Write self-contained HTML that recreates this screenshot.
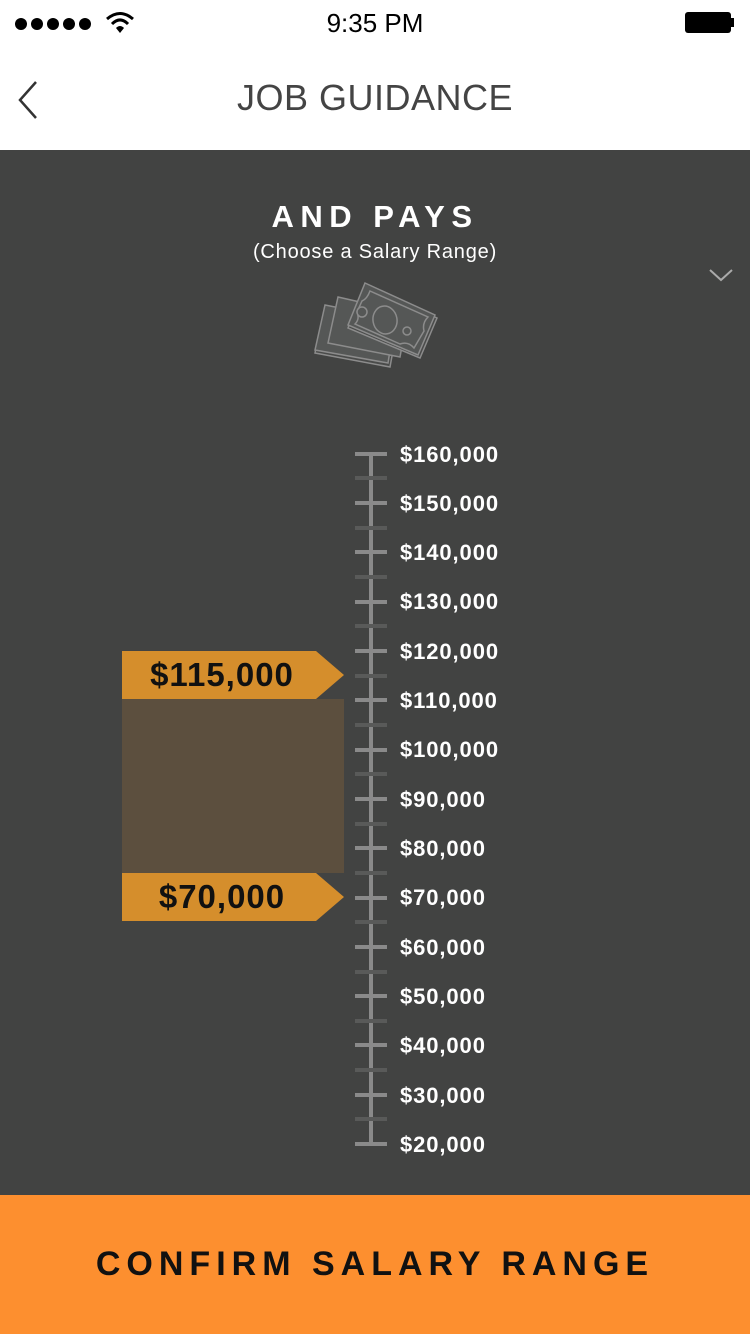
<!DOCTYPE html>
<html><head><meta charset="utf-8"><style>
*{margin:0;padding:0;box-sizing:border-box}
body{width:750px;height:1334px;overflow:hidden;background:#424342;font-family:"Liberation Sans",sans-serif;position:relative}
.abs{position:absolute}
.hdr{left:0;top:0;width:750px;height:150px;background:#fff}
.mj{position:absolute;left:355px;width:32px;height:4px;background:#8a8a8a}
.mn{position:absolute;left:355px;width:32px;height:4px;background:#595a59}
.lb{position:absolute;left:400px;color:#fff;font-size:22px;font-weight:bold;line-height:24px;letter-spacing:0.9px}
.mk{position:absolute;left:122px;width:200px;text-align:center;font-size:33px;font-weight:bold;color:#111;letter-spacing:1px}
</style></head><body>
<div class="abs hdr">
  <div class="abs" style="left:14px;top:16px">
    <svg width="96" height="16"><g fill="#000"><circle cx="7" cy="8" r="6"/><circle cx="23" cy="8" r="6"/><circle cx="39" cy="8" r="6"/><circle cx="55" cy="8" r="6"/><circle cx="71" cy="8" r="6"/></g></svg>
  </div>
  <svg class="abs" style="left:105px;top:11px" width="30" height="24" viewBox="0 0 30 24"><path d="M2 8 Q15 -3 28 8" stroke="#000" stroke-width="3" fill="none"/><path d="M7 13 Q15 5 23 13" stroke="#000" stroke-width="3" fill="none"/><path d="M11 17 L15 22 L19 17 Q15 13 11 17Z" fill="#000"/></svg>
  <div class="abs" style="left:0;width:750px;top:8px;text-align:center;font-size:26px;color:#000">9:35 PM</div>
  <div class="abs" style="left:685px;top:12px;width:46px;height:21px;background:#000;border-radius:3px"></div>
  <div class="abs" style="left:731px;top:18px;width:3px;height:9px;background:#000"></div>
  <svg class="abs" style="left:16px;top:80px" width="24" height="40"><path d="M20 2 L4 20 L20 38" stroke="#333" stroke-width="2.5" fill="none"/></svg>
  <div class="abs" style="left:0;width:750px;top:77px;text-align:center;font-size:36px;color:#444;letter-spacing:0.5px">JOB GUIDANCE</div>
</div>
<div class="abs" style="left:0;width:750px;top:199px;text-align:center;color:#fff;font-size:31px;font-weight:bold;letter-spacing:6.5px">AND PAYS</div>
<div class="abs" style="left:0;width:750px;top:241px;text-align:center;color:#fff;font-size:20px;letter-spacing:0.8px">(Choose a Salary Range)</div>
<svg class="abs" style="left:708px;top:268px" width="28" height="16"><path d="M2 2 L13 12 L24 2" stroke="#aaa" stroke-width="2" fill="none"/></svg>
<svg class="abs" style="left:310px;top:275px" width="130" height="95" viewBox="0 0 130 95">
 <g stroke="#8c8c8c" stroke-width="1.5" fill="#555756">
  <polygon points="15,32 88,48 80,92 5,78" fill="#4a4b4a"/>
  <polygon points="15,30 85,44 78,88 5,75"/>
  <polygon points="28,22 98,38 90,82 18,68"/>
  <polygon points="55,11 127,43 110,83 38,53" fill="#4a4b4a"/>
  <polygon points="55,8 125,40 108,80 38,50"/>
  <path d="M60,16 L118,42 Q112,48 114,56 L104,73 Q98,66 90,69 L45,49 Q50,44 47,37 L52,26 Q57,24 60,16Z" fill="none"/>
  <ellipse cx="75" cy="45" rx="12" ry="14" transform="rotate(-10 75 45)"/>
  <circle cx="52" cy="37" r="5"/><circle cx="97" cy="56" r="4"/>
 </g>
</svg>
<div class="abs" style="left:369px;top:452px;width:4px;height:694px;background:#8a8a8a"></div>
<div class="mj" style="top:452px"></div><div class="mn" style="top:476px"></div>
<div class="mj" style="top:501px"></div><div class="mn" style="top:526px"></div>
<div class="mj" style="top:550px"></div><div class="mn" style="top:575px"></div>
<div class="mj" style="top:600px"></div><div class="mn" style="top:624px"></div>
<div class="mj" style="top:649px"></div><div class="mn" style="top:674px"></div>
<div class="mj" style="top:698px"></div><div class="mn" style="top:723px"></div>
<div class="mj" style="top:748px"></div><div class="mn" style="top:772px"></div>
<div class="mj" style="top:797px"></div><div class="mn" style="top:822px"></div>
<div class="mj" style="top:846px"></div><div class="mn" style="top:871px"></div>
<div class="mj" style="top:896px"></div><div class="mn" style="top:920px"></div>
<div class="mj" style="top:945px"></div><div class="mn" style="top:970px"></div>
<div class="mj" style="top:994px"></div><div class="mn" style="top:1019px"></div>
<div class="mj" style="top:1043px"></div><div class="mn" style="top:1068px"></div>
<div class="mj" style="top:1093px"></div><div class="mn" style="top:1117px"></div>
<div class="mj" style="top:1142px"></div>
<div class="lb" style="top:443px">$160,000</div>
<div class="lb" style="top:492px">$150,000</div>
<div class="lb" style="top:541px">$140,000</div>
<div class="lb" style="top:590px">$130,000</div>
<div class="lb" style="top:640px">$120,000</div>
<div class="lb" style="top:689px">$110,000</div>
<div class="lb" style="top:738px">$100,000</div>
<div class="lb" style="top:788px">$90,000</div>
<div class="lb" style="top:837px">$80,000</div>
<div class="lb" style="top:886px">$70,000</div>
<div class="lb" style="top:936px">$60,000</div>
<div class="lb" style="top:985px">$50,000</div>
<div class="lb" style="top:1034px">$40,000</div>
<div class="lb" style="top:1084px">$30,000</div>
<div class="lb" style="top:1133px">$20,000</div>
<div class="abs" style="left:122px;top:699px;width:222px;height:174px;background:#5c4f3e"></div>
<svg class="abs" style="left:122px;top:651px" width="222" height="48"><polygon points="0,0 194,0 222,24 194,48 0,48" fill="#d58e2c"/></svg>
<svg class="abs" style="left:122px;top:873px" width="222" height="48"><polygon points="0,0 194,0 222,24 194,48 0,48" fill="#d58e2c"/></svg>
<div class="mk" style="top:656px">$115,000</div>
<div class="mk" style="top:878px">$70,000</div>
<div class="abs" style="left:0;top:1195px;width:750px;height:139px;background:#fd8f2f"></div>
<div class="abs" style="left:0;top:1245px;width:750px;text-align:center;font-size:34px;font-weight:bold;color:#111;letter-spacing:6px">CONFIRM SALARY RANGE</div>
</body></html>
